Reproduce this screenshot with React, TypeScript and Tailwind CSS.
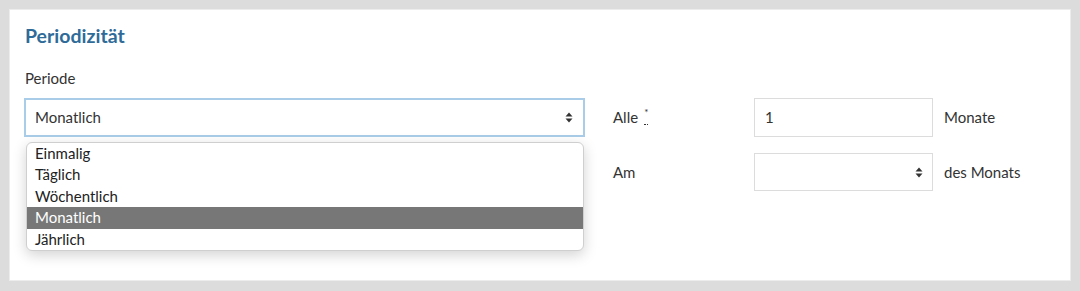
import React from "react";

const font = { fontFamily: "Lato, 'Open Sans', sans-serif" };

function Arrows() {
  return (
    <svg width="8" height="11" viewBox="0 0 8 11" className="block">
      <path d="M4 0.5 L7.5 4.5 H0.5 Z" fill="#333" />
      <path d="M4 10.5 L7.5 6.5 H0.5 Z" fill="#333" />
    </svg>
  );
}

export default function App() {
  const items = ["Einmalig", "Täglich", "Wöchentlich", "Monatlich", "Jährlich"];
  return (
    <div className="w-[1080px] h-[291px] bg-[#dcdcdc] pt-[9px] pl-[9px]" style={font}>
      <div className="w-[1062px] h-[272px] bg-white border border-[#ececec] pl-[14px] pt-[14px] text-[#333]">
        <h2 className="pl-[1px] text-[19.5px] leading-[24px] font-bold text-[#2f6b99]">Periodizität</h2>
        <div className="pl-[1px] mt-[20px] text-[15px] leading-[20px]">Periode</div>
        <div className="mt-[10px] flex">
          <div className="relative w-[561px]">
            <div className="h-[39px] border-2 border-[#a9cde8] bg-white flex items-center justify-between pl-[9px] pr-[10px] text-[15px]">
              <span>Monatlich</span>
              <Arrows />
            </div>
            <div className="absolute left-[2px] top-[44px] w-[558px] bg-white border border-[#cfcfcf] rounded-[6px] shadow-[0_4px_14px_rgba(0,0,0,0.18)] overflow-hidden">
              {items.map((it) => (
                <div
                  key={it}
                  className={
                    "h-[21.4px] leading-[21.4px] pl-[8px] text-[15px] " +
                    (it === "Monatlich" ? "bg-[#777777] text-white" : "text-[#222]")
                  }
                >
                  {it}
                </div>
              ))}
            </div>
          </div>
          <div className="ml-[28px] flex flex-col gap-[16px]">
            <div className="flex items-center h-[39px]">
              <div className="w-[141px] text-[15px] flex items-start">
                <span>Alle</span>
                <span className="ml-[6px] mt-[1px] text-[10px] leading-[10px] border-b border-dotted border-[#333] pb-[7px]">*</span>
              </div>
              <div className="w-[179px] h-[39px] border border-[#dcdcdc] bg-white flex items-center pl-[10px] text-[15px]">1</div>
              <div className="ml-[11px] text-[15px]">Monate</div>
            </div>
            <div className="flex items-center h-[38px]">
              <div className="w-[141px] text-[15px]">Am</div>
              <div className="w-[179px] h-[38px] border border-[#dcdcdc] bg-white flex items-center justify-end pr-[9px]">
                <Arrows />
              </div>
              <div className="ml-[11px] text-[15px]">des Monats</div>
            </div>
          </div>
        </div>
      </div>
    </div>
  );
}
